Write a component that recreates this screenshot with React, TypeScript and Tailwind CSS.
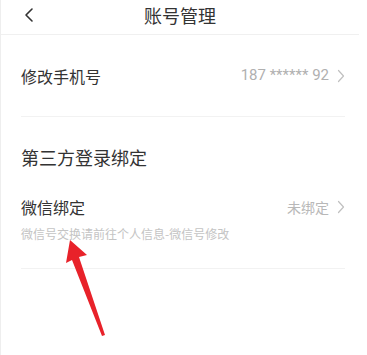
export default function App() {
  return (
    <div
      className="relative w-[367px] h-[355px] bg-white border-l border-[#eeeeee] overflow-hidden"
      style={{ fontFamily: '"Noto Sans CJK SC", "Noto Sans", sans-serif' }}
    >
      {/* Header */}
      <div className="relative h-[35px] flex items-center justify-center border-b border-[#f0f0f0] mr-[8px]">
        <svg viewBox="0 0 12 16" className="absolute left-[22px] top-[7px] w-[12px] h-[16px]" fill="none">
          <path d="M9 2L3 8l6 6" stroke="#333" strokeWidth="1.6" strokeLinecap="round" strokeLinejoin="round" />
        </svg>
        <span className="text-[18px] leading-[18px] text-[#333] pb-[5px]">账号管理</span>
      </div>

      {/* Phone row */}
      <div className="ml-5 mr-[22px] h-[82px] flex items-center justify-between border-b border-[#f2f2f2]">
        <span className="text-[16px] leading-[16px] text-[#333] pt-[1px]">修改手机号</span>
        <div className="flex items-center gap-[8px] text-[#b0b0b0]">
          <span className="text-[15px] leading-[15px]" style={{ fontFamily: 'Roboto, "Noto Sans", sans-serif' }}>
            187 ****** 92
          </span>
          <svg viewBox="0 0 8 14" className="w-[8px] h-[14px]" fill="none">
            <path d="M1.5 1.5L6.5 7l-5 5.5" stroke="#c0c0c0" strokeWidth="1.2" strokeLinecap="round" strokeLinejoin="round" />
          </svg>
        </div>
      </div>

      {/* Third party */}
      <div className="ml-5 mt-[31px] text-[18px] leading-[18px] text-[#333]">第三方登录绑定</div>

      <div className="ml-5 mr-[22px] mt-[33px] pb-[28px] border-b border-[#f2f2f2]">
        <div className="flex items-center justify-between">
          <span className="text-[16px] leading-[16px] text-[#333]">微信绑定</span>
          <div className="flex items-center gap-[8px]">
            <span className="text-[14px] leading-[14px] text-[#b8b8b8]">未绑定</span>
            <svg viewBox="0 0 8 14" className="w-[8px] h-[14px]" fill="none">
              <path d="M1.5 1.5L6.5 7l-5 5.5" stroke="#c0c0c0" strokeWidth="1.2" strokeLinecap="round" strokeLinejoin="round" />
            </svg>
          </div>
        </div>
        <div className="mt-[13px] text-[12px] leading-[12px] text-[#c4c4c4]">微信号交换请前往个人信息-微信号修改</div>
      </div>

      {/* Red annotation arrow */}
      <svg className="absolute left-0 top-0 w-[367px] h-[355px] pointer-events-none" viewBox="0 0 367 355">
        <polygon
          points="69,240 86,255 78,257 104,335 101,336 71,260 65,263"
          fill="#e8222a"
        />
      </svg>
    </div>
  );
}
